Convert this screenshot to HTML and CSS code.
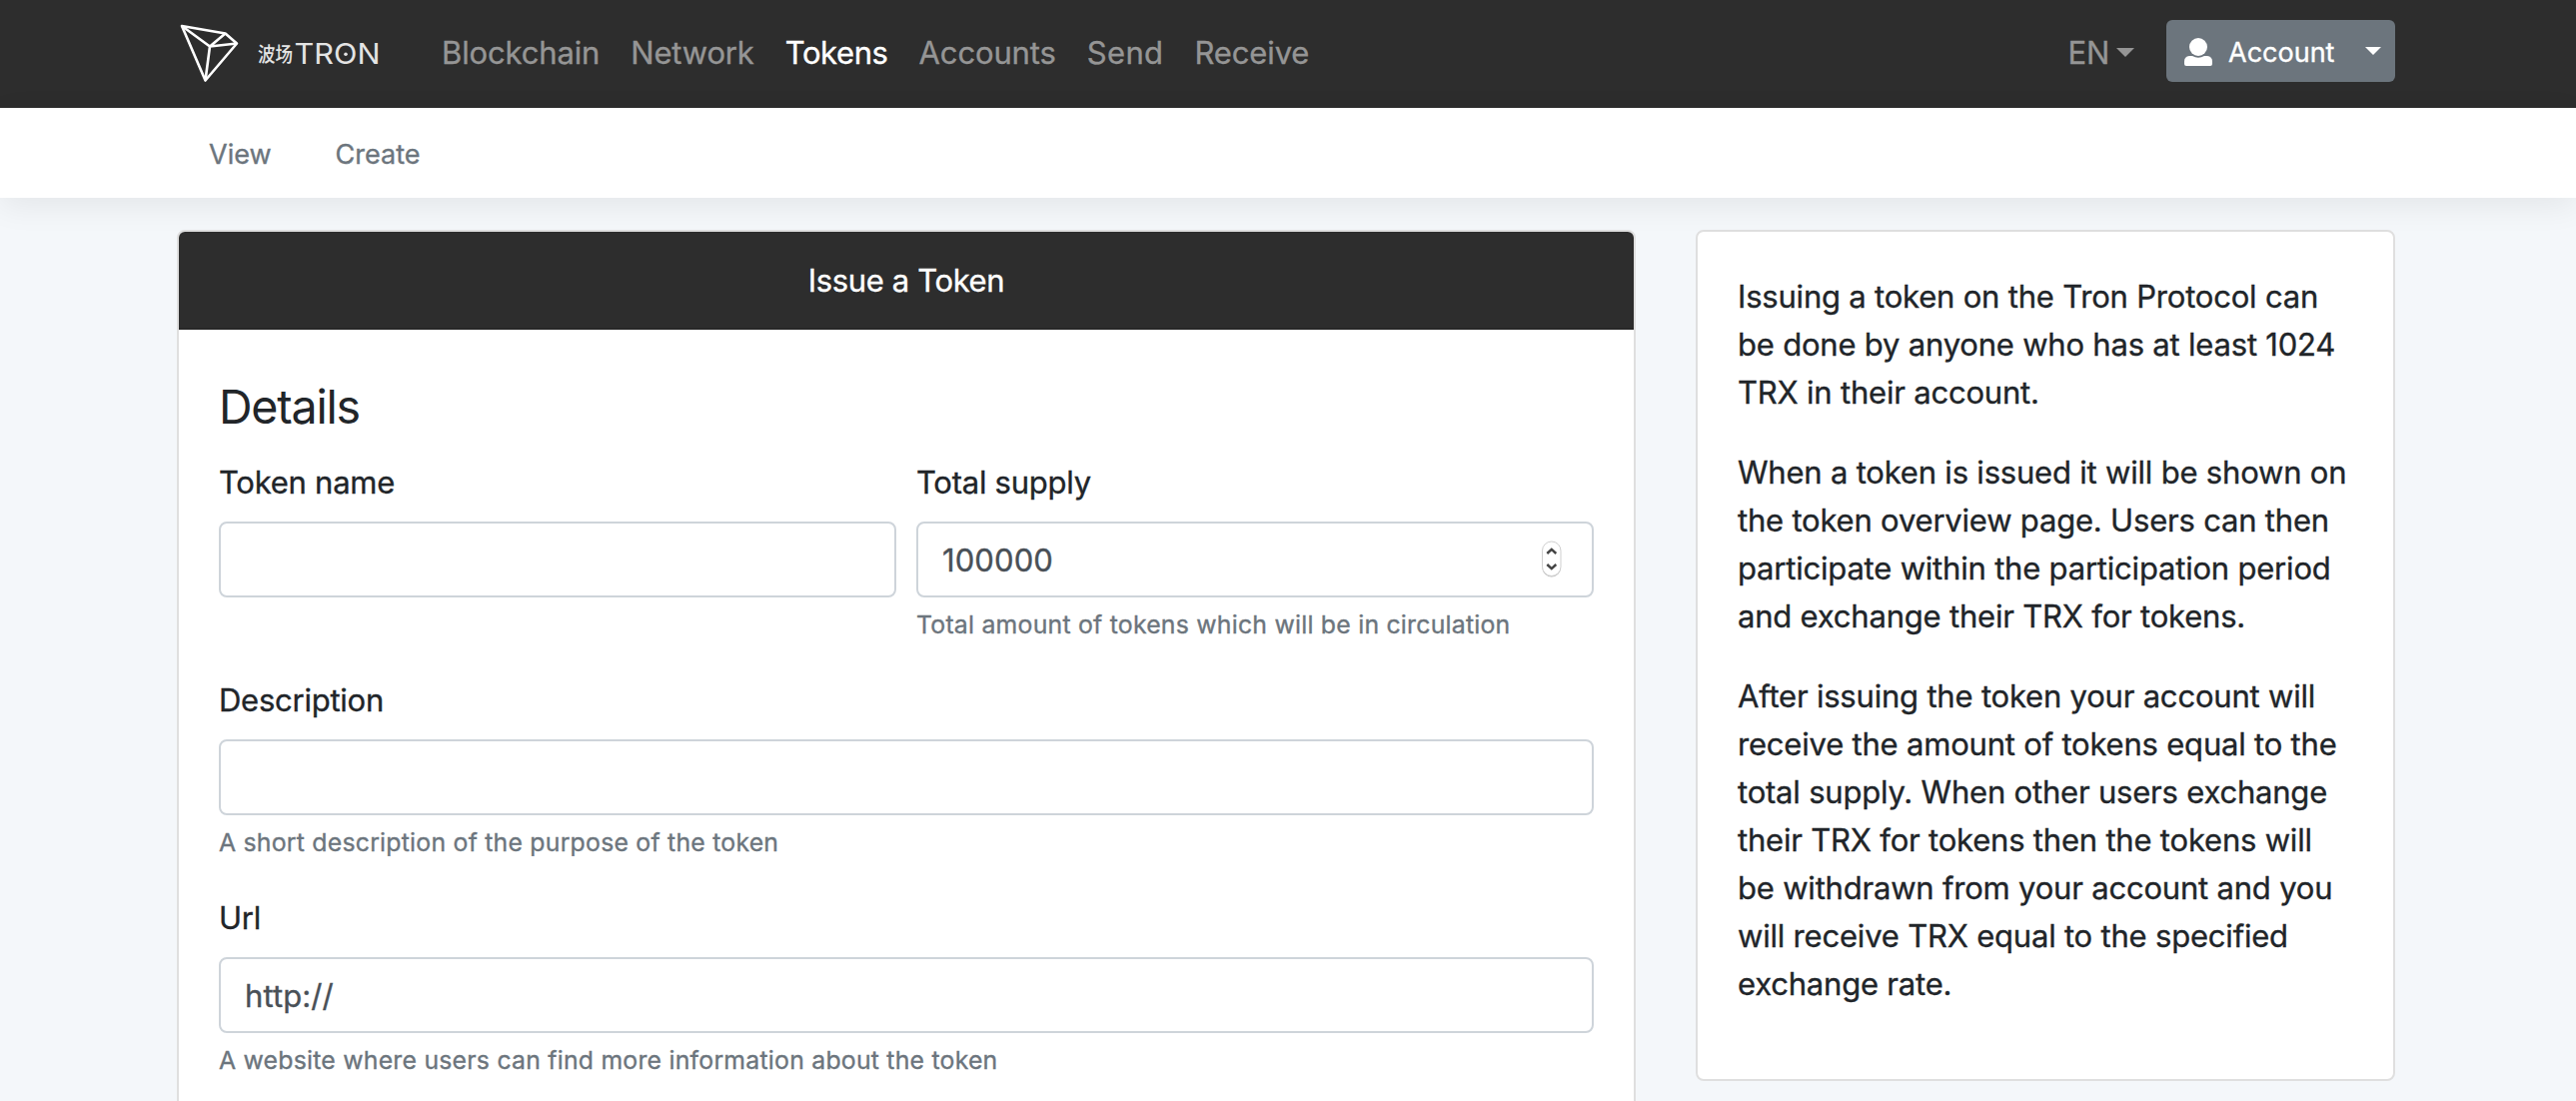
FILE: index.html
```html
<!DOCTYPE html>
<html lang="en">
<head>
<meta charset="utf-8">
<title>Issue a Token</title>
<link rel="stylesheet" href="styles.css">
</head>
<body>
<header class="topbar">
  <a class="brand" href="#">
    <svg class="brand-mark" viewBox="0 0 60 60" fill="none" stroke="#fff" stroke-width="2.6" stroke-linejoin="round">
      <path d="M2 2 L45.500 9.500 L57 19.500 L25.500 56.500 Z"/>
      <path d="M2 2 L30 22.500 L57 19.500 M30 22.500 L45.500 9.500 M30 22.500 L25.500 56.500"/>
    </svg>
    <svg class="brand-text" viewBox="0 0 124 24" fill="#e4e4e4">
      <text class="brand-han" x="0" y="19.500" textLength="35" lengthAdjust="spacingAndGlyphs">波场</text>
      <text class="brand-latin" x="36.500" y="22" textLength="86" lengthAdjust="spacingAndGlyphs">TRON</text>
      <circle cx="88" cy="12.300" r="1.800"/>
    </svg>
  </a>
  <nav class="mainnav">
    <a href="#">Blockchain</a>
    <a href="#">Network</a>
    <a class="active" href="#">Tokens</a>
    <a href="#">Accounts</a>
    <a class="loose" href="#">Send</a>
    <a href="#">Receive</a>
  </nav>
  <div class="tools">
    <a class="lang" href="#"><span>EN</span><i class="caret"></i></a>
    <button class="account" type="button">
      <svg class="user" viewBox="0 0 28 28" fill="#fff"><circle cx="14" cy="9" r="9"/><path d="M5 18 H8 Q14 21.500 20 18 H23 Q28 18.500 28 23.500 V26 Q28 28 26 28 H2 Q0 28 0 26 V23.500 Q0 18.500 5 18 Z"/></svg>
      <span>Account</span><i class="caret small-caret"></i>
    </button>
  </div>
</header>
<nav class="subnav">
  <a href="#">View</a>
  <a href="#">Create</a>
</nav>
<main class="content">
  <section class="card form-card">
    <h1 class="card-header">Issue a Token</h1>
    <form class="card-body">
      <h2>Details</h2>
      <div class="row">
        <div class="field">
          <label for="name">Token name</label>
          <input id="name" type="text">
        </div>
        <div class="field">
          <label for="supply">Total supply</label>
          <div class="number">
            <input id="supply" type="text" value="100000">
            <svg class="stepper" viewBox="0 0 22 38"><rect x="1.500" y="2" width="18.500" height="34.500" rx="9.250" fill="#bdbdbd"/><rect x="1.500" y="1" width="18.500" height="34.500" rx="9.250" fill="#fff" stroke="#cfcfcf"/><path d="M6.300 13 L10.800 8.800 L15.300 13 M6.300 24 L10.800 28.200 L15.300 24" fill="none" stroke="#444" stroke-width="2.400"/></svg>
          </div>
          <small>Total amount of tokens which will be in circulation</small>
        </div>
      </div>
      <div class="field">
        <label for="description">Description</label>
        <input id="description" type="text">
        <small>A short description of the purpose of the token</small>
      </div>
      <div class="field">
        <label for="url">Url</label>
        <input id="url" type="text" value="http://">
        <small>A website where users can find more information about the token</small>
      </div>
    </form>
  </section>
  <aside class="card info-card">
    <p>Issuing a token on the Tron Protocol can<br>be done by anyone who has at least 1024<br>TRX in their account.</p>
    <p>When a token is issued it will be shown on<br>the token overview page. Users can then<br>participate within the participation period<br>and exchange their TRX for tokens.</p>
    <p>After issuing the token your account will<br>receive the amount of tokens equal to the<br>total supply. When other users exchange<br>their TRX for tokens then the tokens will<br>be withdrawn from your account and you<br>will receive TRX equal to the specified<br>exchange rate.</p>
  </aside>
</main>
</body>
</html>
```
FILE: styles.css
```css
* { box-sizing: border-box; }

body {
  display: flex;
  flex-direction: column;
  margin: 0;
  height: 1102px;
  overflow: hidden;
  background: #f4f7fa;
  color: #212529;
  font-family: Inter, "Liberation Sans", sans-serif;
  font-size: 31px;
  line-height: 48px;
  letter-spacing: -.25px;
  -webkit-text-stroke: .35px currentColor;
}

a { color: inherit; text-decoration: none; }

.topbar {
  display: flex;
  flex: none;
  align-items: center;
  height: 108px;
  padding: 0 181px 0 177px;
  background: #2d2d2d;
  color: #959595;
}

.brand { display: flex; align-items: center; }
.brand-mark { width: 60px; height: 60px; margin: -1px 0 0 3px; }
.brand-text { width: 124px; height: 24px; margin-left: 18px; overflow: visible; letter-spacing: 0; -webkit-text-stroke: 0; }
.brand-han { font: 500 20px "Noto Sans CJK SC", sans-serif; }
.brand-latin { font: 400 28px Inter, sans-serif; }

.mainnav { display: flex; gap: 31px; margin: -3px 0 0 60px; letter-spacing: -.15px; }
.mainnav .active { color: #fff; letter-spacing: -.4px; }
.mainnav .loose { letter-spacing: .4px; }

.tools { display: flex; align-items: center; margin-left: auto; }
.lang { display: flex; align-items: center; margin-top: -3px; }

.caret {
  width: 18px;
  height: 9px;
  margin-left: 7px;
  background: currentColor;
  clip-path: polygon(0 0, 100% 0, 50% 100%);
}

.account {
  display: flex;
  align-items: center;
  width: 229px;
  height: 62px;
  margin: -6px 0 0 32px;
  padding: 0 14px 0 18px;
  border: 0;
  border-radius: 6px;
  background: #6c757d;
  color: #fff;
  font: 27px/42px Inter, sans-serif;
}

.account span { margin-top: 3px; }
.user { width: 28px; height: 28px; margin: 2px 16px 0 0; }
.small-caret { width: 16px; height: 8px; margin-left: auto; }

.subnav {
  position: relative;
  display: flex;
  flex: none;
  gap: 64px;
  height: 90px;
  padding: 26px 0 0 209px;
  background: #fff;
  color: #6c757d;
  font-size: 27px;
  line-height: 42px;
  letter-spacing: 0;
  box-shadow: 0 8px 32px rgba(0, 0, 0, .07);
}

.content {
  display: flex;
  flex: 1;
  min-height: 0;
  align-items: flex-start;
  gap: 60px;
  padding: 32px 181px 0 177px;
}

.card {
  border: 2px solid #dfdfdf;
  border-radius: 8px;
  background: #fff;
}

.form-card { width: 1460px; overflow: hidden; }

.card-header {
  height: 98px;
  margin: 0;
  padding: 25px 0 23px;
  background: #2d2d2d;
  border-bottom: 2px solid #282828;
  color: #fff;
  font-size: 31px;
  font-weight: 400;
  letter-spacing: -.35px;
  text-align: center;
}

.card-body { padding: 48px 40px; }

.card-body h2 {
  margin: 0 0 22px;
  font-size: 46.5px;
  font-weight: 400;
  line-height: 58px;
  letter-spacing: -1.2px;
  -webkit-text-stroke: 0;
}

.row { display: flex; gap: 20px; }
.row .field { flex: 1; }
.field { margin-bottom: 32px; }
.field label { display: block; padding-top: 1px; margin-bottom: 15px; }

.field input {
  display: block;
  width: 100%;
  height: 76px;
  padding: 0 24px;
  border: 2px solid #ced4da;
  border-radius: 8px;
  background: #fff;
  color: #495057;
  font: inherit;
  letter-spacing: .1px;
}

.field small {
  display: block;
  margin-top: 8px;
  color: #6c757d;
  font-size: 24.8px;
  line-height: 38px;
  letter-spacing: .23px;
}

.number { position: relative; }

.stepper {
  position: absolute;
  top: 19px;
  right: 31px;
  width: 22px;
  height: 38px;
}

.info-card { width: 700px; height: 852px; padding: 41px 40px 0; letter-spacing: -.2px; }
.info-card p { margin: 0 0 32px; white-space: nowrap; }
```
